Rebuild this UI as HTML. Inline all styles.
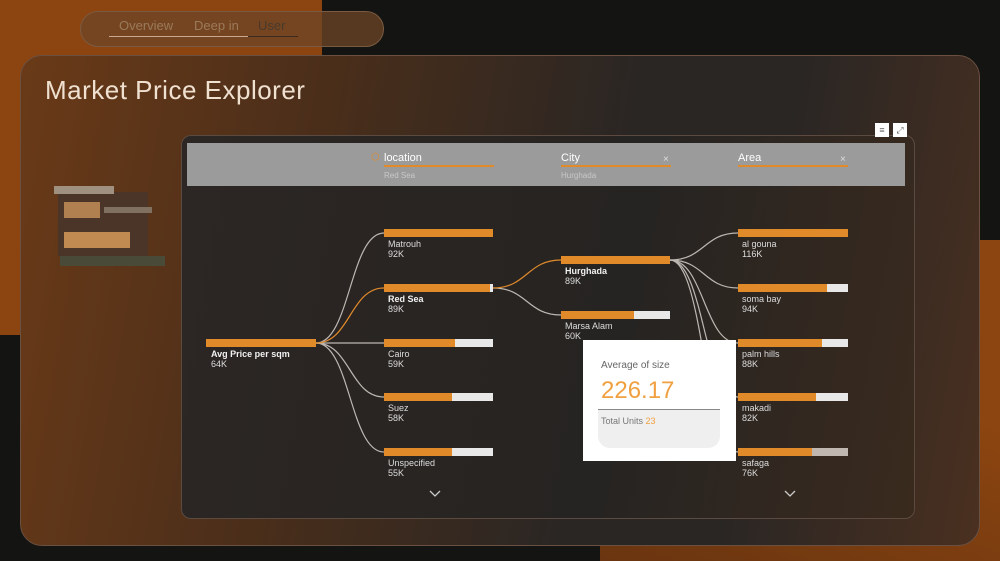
<!DOCTYPE html>
<html><head><style>
body{margin:0;width:1000px;height:561px;overflow:hidden;background:#141412;font-family:"Liberation Sans",sans-serif;position:relative}
.abs{position:absolute}
.lbl{position:absolute;font-size:9px;color:#ddd;line-height:10px}
.lbl b{color:#f2f2f2}
.bar{position:absolute;height:8px;background:#e8e8e8}
.bar i{display:block;height:100%;background:#e08a2a}
</style></head><body>
<div class="abs" style="left:0;top:0;width:322px;height:335px;background:#8c4510"></div>
<div class="abs" style="left:600px;top:240px;width:400px;height:321px;background:linear-gradient(200deg,#8c4510 40%,#6a3510 100%)"></div>
<div class="abs" style="left:80px;top:11px;width:302px;height:34px;border-radius:18px;background:rgba(110,70,40,.75);border:1px solid #7a5a40"></div>
<div class="abs" style="left:119px;top:18px;font-size:13px;color:#9a7a5a">Overview</div>
<div class="abs" style="left:194px;top:18px;font-size:13px;color:#9a7a5a">Deep in</div>
<div class="abs" style="left:258px;top:18px;font-size:13px;color:#4a3a2a">User</div>
<div class="abs" style="left:109px;top:36px;width:139px;height:1px;background:#c8a890"></div>
<div class="abs" style="left:248px;top:36px;width:50px;height:1px;background:#3a2a20"></div>
<div class="abs" style="left:20px;top:55px;width:958px;height:489px;border-radius:22px;border:1px solid #6a5040;background:linear-gradient(100deg,#6a3a18 0%,#4a2e1a 30%,#2a2624 60%,#2a2624 75%,#4a3020 100%)"></div>
<div class="abs" style="left:45px;top:75px;font-size:26px;color:#efe0d0;letter-spacing:.5px">Market Price Explorer</div>
<!-- house -->
<div class="abs" style="left:58px;top:192px;width:90px;height:64px;background:#4a3528"></div>
<div class="abs" style="left:54px;top:186px;width:60px;height:8px;background:#a09080"></div>
<div class="abs" style="left:64px;top:202px;width:36px;height:16px;background:#b08050"></div>
<div class="abs" style="left:64px;top:232px;width:66px;height:16px;background:#c08a50"></div>
<div class="abs" style="left:104px;top:207px;width:48px;height:6px;background:#807060"></div>
<div class="abs" style="left:60px;top:256px;width:105px;height:10px;background:#4a4a38"></div>
<!-- visual -->
<div class="abs" style="left:181px;top:135px;width:732px;height:382px;border-radius:10px;border:1px solid #5a4a40;background:linear-gradient(100deg,#2c2624,#262422 60%,#3a2a1e)"></div>
<div class="abs" style="left:875px;top:123px;width:14px;height:14px;background:#fff;color:#666;font-size:9px;text-align:center;line-height:14px">≡</div>
<div class="abs" style="left:893px;top:123px;width:14px;height:14px;background:#fff;color:#666;font-size:9px;text-align:center;line-height:14px">⤢</div>
<div class="abs" style="left:187px;top:143px;width:718px;height:43px;background:#9b9b9b"></div>
<div class="abs" style="left:371px;top:152px;font-size:10px;color:#e08a2a">⬡</div>
<div class="abs" style="left:384px;top:152px;font-size:11px;color:#fff">location</div>
<div class="abs" style="left:384px;top:165px;width:110px;height:2px;background:#e08a2a"></div>
<div class="abs" style="left:384px;top:171px;font-size:8px;color:#c8c8c8">Red Sea</div>
<div class="abs" style="left:561px;top:152px;font-size:11px;color:#fff">City</div>
<div class="abs" style="left:663px;top:154px;font-size:10px;color:#ddd">×</div>
<div class="abs" style="left:561px;top:165px;width:110px;height:2px;background:#e08a2a"></div>
<div class="abs" style="left:561px;top:171px;font-size:8px;color:#c8c8c8">Hurghada</div>
<div class="abs" style="left:738px;top:152px;font-size:11px;color:#fff">Area</div>
<div class="abs" style="left:840px;top:154px;font-size:10px;color:#ddd">×</div>
<div class="abs" style="left:738px;top:165px;width:110px;height:2px;background:#e08a2a"></div>
<svg class="abs" style="left:0;top:0" width="1000" height="561" fill="none" stroke-width="1.2">
<g stroke="#bdb8b2">
<path d="M316 343 C350 343,350 233,384 233"/>
<path d="M316 343 L384 343"/>
<path d="M316 343 C350 343,350 397,384 397"/>
<path d="M316 343 C350 343,350 452,384 452"/>
<path d="M493 288 C527 288,527 315,561 315"/>
<path d="M670 260 C704 260,704 233,738 233"/>
<path d="M670 260 C704 260,704 288,738 288"/>
<path d="M670 260 C704 260,704 343,738 343"/>
<path d="M670 260 C704 260,704 397,738 397"/>
<path d="M670 260 C704 260,704 452,738 452"/>
</g>
<g stroke="#e08a2a">
<path d="M316 343 C350 343,350 288,384 288"/>
<path d="M493 288 C527 288,527 260,561 260"/>
</g>
<g stroke="#ccc" stroke-width="1.3"><path d="M430 491 l5 5 l5 -5"/><path d="M785 491 l5 5 l5 -5"/></g>
</svg>
<div class="bar" style="left:206px;top:339px;width:110px"><i style="width:100%"></i></div>
<div class="lbl" style="left:211px;top:349px"><b>Avg Price per sqm</b><br>64K</div>
<div class="bar" style="left:384px;top:229px;width:109px"><i style="width:100%"></i></div>
<div class="lbl" style="left:388px;top:239px">Matrouh<br>92K</div>
<div class="bar" style="left:384px;top:284px;width:109px"><i style="width:97%"></i></div>
<div class="lbl" style="left:388px;top:294px"><b>Red Sea</b><br>89K</div>
<div class="bar" style="left:384px;top:339px;width:109px"><i style="width:65%"></i></div>
<div class="lbl" style="left:388px;top:349px">Cairo<br>59K</div>
<div class="bar" style="left:384px;top:393px;width:109px"><i style="width:62%"></i></div>
<div class="lbl" style="left:388px;top:403px">Suez<br>58K</div>
<div class="bar" style="left:384px;top:448px;width:109px"><i style="width:62%"></i></div>
<div class="lbl" style="left:388px;top:458px">Unspecified<br>55K</div>
<div class="bar" style="left:561px;top:256px;width:109px"><i style="width:100%"></i></div>
<div class="lbl" style="left:565px;top:266px"><b>Hurghada</b><br>89K</div>
<div class="bar" style="left:561px;top:311px;width:109px"><i style="width:67%"></i></div>
<div class="lbl" style="left:565px;top:321px">Marsa Alam<br>60K</div>
<div class="bar" style="left:738px;top:229px;width:110px"><i style="width:100%"></i></div>
<div class="lbl" style="left:742px;top:239px">al gouna<br>116K</div>
<div class="bar" style="left:738px;top:284px;width:110px"><i style="width:81%"></i></div>
<div class="lbl" style="left:742px;top:294px">soma bay<br>94K</div>
<div class="bar" style="left:738px;top:339px;width:110px"><i style="width:76%"></i></div>
<div class="lbl" style="left:742px;top:349px">palm hills<br>88K</div>
<div class="bar" style="left:738px;top:393px;width:110px"><i style="width:71%"></i></div>
<div class="lbl" style="left:742px;top:403px">makadi<br>82K</div>
<div class="bar" style="left:738px;top:448px;width:110px;background:#c0b8b0"><i style="width:67%"></i></div>
<div class="lbl" style="left:742px;top:458px">safaga<br>76K</div>
<!-- tooltip -->
<div class="abs" style="left:583px;top:340px;width:153px;height:121px;background:#fff"></div>
<div class="abs" style="left:601px;top:360px;font-size:10px;color:#666">Average of size</div>
<div class="abs" style="left:601px;top:377px;font-size:24px;color:#f0a040">226.17</div>
<div class="abs" style="left:598px;top:409px;width:122px;height:38px;background:#efefef;border-top:1px solid #888;border-radius:0 0 12px 12px"></div>
<div class="abs" style="left:601px;top:416px;font-size:9px;color:#777">Total Units <span style="color:#f0a040">23</span></div>
</body></html>
